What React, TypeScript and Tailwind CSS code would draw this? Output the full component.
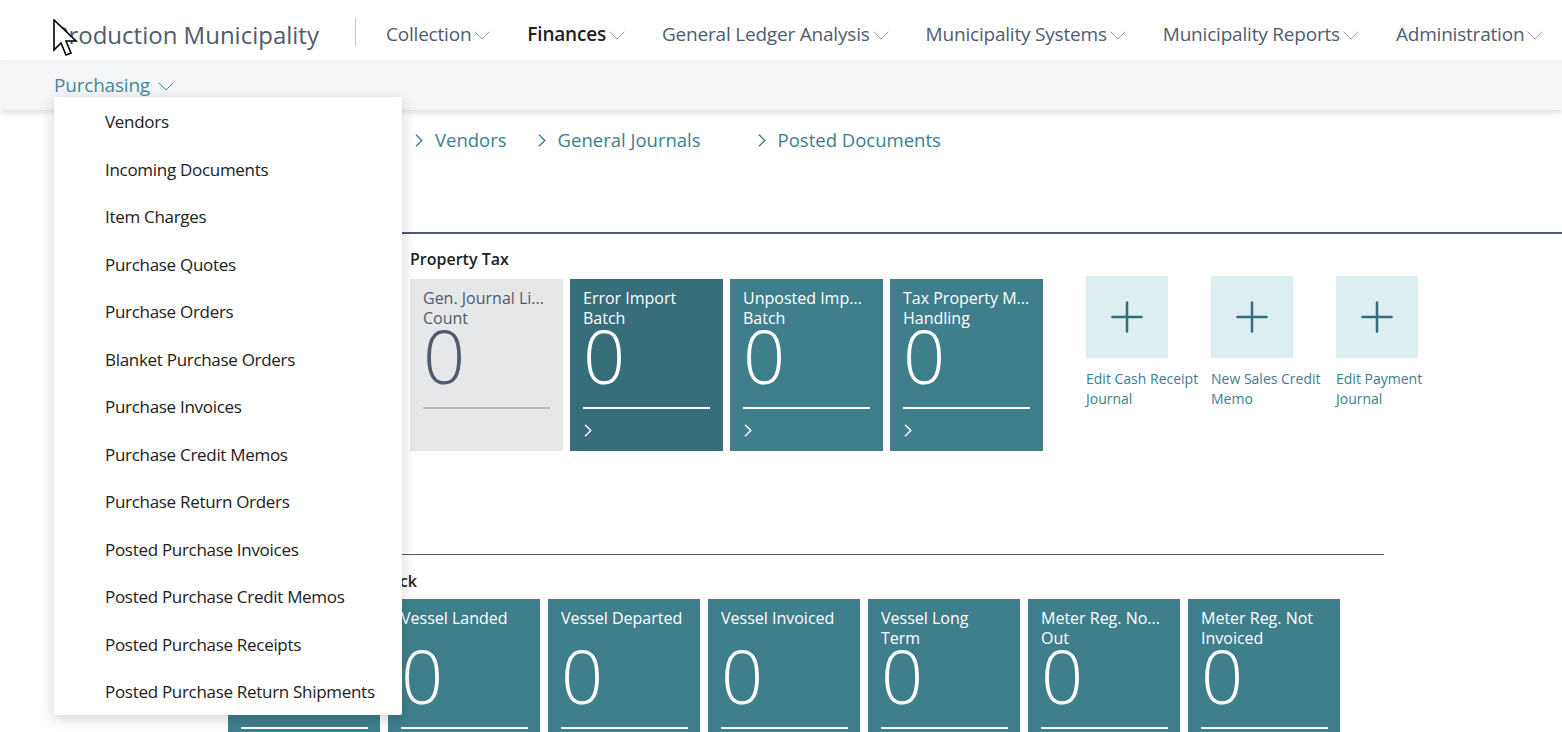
import { Plus } from 'lucide-react'

const NAV = ['Collection', 'Finances', 'General Ledger Analysis', 'Municipality Systems', 'Municipality Reports', 'Administration']

const MENU = [
  'Vendors',
  'Incoming Documents',
  'Item Charges',
  'Purchase Quotes',
  'Purchase Orders',
  'Blanket Purchase Orders',
  'Purchase Invoices',
  'Purchase Credit Memos',
  'Purchase Return Orders',
  'Posted Purchase Invoices',
  'Posted Purchase Credit Memos',
  'Posted Purchase Receipts',
  'Posted Purchase Return Shipments',
]

const TAX_TILES = [
  { title: ['Gen. Journal Li...', 'Count'], kind: 'gray' },
  { title: ['Error Import', 'Batch'], kind: 'dark' },
  { title: ['Unposted Imp...', 'Batch'], kind: 'teal' },
  { title: ['Tax Property M...', 'Handling'], kind: 'teal' },
]

const VESSEL_TILES = [
  ['Vessel Arrived'],
  ['Vessel Landed'],
  ['Vessel Departed'],
  ['Vessel Invoiced'],
  ['Vessel Long', 'Term'],
  ['Meter Reg. No...', 'Out'],
  ['Meter Reg. Not', 'Invoiced'],
]

const ACTIONS = [
  ['Edit Cash Receipt', 'Journal'],
  ['New Sales Credit', 'Memo'],
  ['Edit Payment', 'Journal'],
]

// thin chevrons like the Fluent ones
function Down({ className = '' }: { className?: string }) {
  return (
    <svg className={className} width="16" height="9" viewBox="0 0 16 9" fill="none">
      <polyline points="0.7,0.7 8,8 15.3,0.7" stroke="currentColor" strokeWidth="1" />
    </svg>
  )
}

function Right({ className = '' }: { className?: string }) {
  return (
    <svg className={className} width="8" height="13" viewBox="0 0 8 13" fill="none">
      <polyline points="1,0.8 6.8,6.5 1,12.2" stroke="currentColor" strokeWidth="1.4" />
    </svg>
  )
}

function Tile({ title, kind, w }: { title: string[]; kind: string; w: string }) {
  const bg = kind === 'gray' ? 'bg-[#e6e7e9] text-[#505c6d]' : kind === 'dark' ? 'bg-[#366e79] text-white' : 'bg-[#3f7f8c] text-white'
  const line = kind === 'gray' ? 'bg-[#b9bec4]' : 'bg-white'
  return (
    <div className={`${w} h-[172px] shrink-0 ${bg} flex flex-col px-[13px] pt-[9px]`}>
      <div className="h-[40px] text-[16px] leading-[20px] whitespace-nowrap">
        {title.map((t) => (
          <div key={t}>{t}</div>
        ))}
      </div>
      <div className="h-[79px] text-[74px] leading-[56px] font-light">0</div>
      <div className={`h-[2px] w-[127px] ${line}`} />
      {kind !== 'gray' && <Right className="mt-[15px] ml-[1px]" />}
    </div>
  )
}

export default function App() {
  return (
    <div className="relative w-[1562px] h-[732px] overflow-hidden bg-white font-['Segoe_UI','Open_Sans',sans-serif]">
      {/* top bar */}
      <div className="h-[60px] flex items-center pl-[54px] pt-[9px]">
        <span className="text-[24px] text-[#505c6d]">Production Municipality</span>
        <div className="ml-[36px] w-px h-[28px] bg-[#c6c8cc] -mt-[6px]" />
        <div className="ml-[30px] flex items-center gap-[37px]">
          {NAV.map((n) => (
            <div key={n} className={`flex items-center text-[19px] tracking-[-0.2px] ${n === 'Finances' ? 'font-semibold text-[#212121]' : 'text-[#505c6d]'}`}>
              {n}
              <Down className="ml-[3px] mt-[2px] text-[#9aa0a6]" />
            </div>
          ))}
        </div>
      </div>

      {/* sub bar */}
      <div className="h-[50px] bg-[#f4f5f6] shadow-[0_3px_5px_rgba(0,0,0,0.12)] flex items-center pl-[54px] relative z-10">
        <span className="text-[19px] text-[#3f8a99] tracking-[-0.2px]">Purchasing</span>
        <Down className="ml-[8px] mt-[2px] text-[#3f8a99]" />
      </div>

      {/* content */}
      <div className="pl-[228px]">
        <div className="h-[60px] flex items-center pl-[187px] text-[18.5px] text-[#3a7f8f]">
          <div className="flex items-center gap-[12px]">
            <Right />
            Vendors
          </div>
          <div className="flex items-center gap-[12px] ml-[31px]">
            <Right />
            General Journals
          </div>
          <div className="flex items-center gap-[12px] ml-[57px]">
            <Right />
            Posted Documents
          </div>
        </div>

        <div className="mt-[62px] h-[2px] bg-[#505c6d]" />

        <div className="flex pl-[182px]">
          <div>
            <div className="pt-[13px] h-[45px] text-[16px] font-semibold text-[#212121]">Property Tax</div>
            <div className="flex gap-[7px]">
              {TAX_TILES.map((t) => (
                <Tile key={t.title[0]} title={t.title} kind={t.kind} w="w-[153px]" />
              ))}
            </div>
          </div>
          <div className="ml-[43px] mt-[42px] flex gap-[43px]">
            {ACTIONS.map((a) => (
              <div key={a[0]} className="w-[82px]">
                <div className="w-[82px] h-[82px] bg-[#ddeef1] flex items-center justify-center">
                  <Plus className="w-[50px] h-[50px] text-[#366e79]" strokeWidth={1.2} />
                </div>
                <div className="mt-[11px] text-[14px] leading-[20px] text-[#3a7f8f] whitespace-nowrap">
                  {a.map((l) => (
                    <div key={l}>{l}</div>
                  ))}
                </div>
              </div>
            ))}
          </div>
        </div>

        <div className="mt-[103px] w-[1156px] h-px bg-[#505c6d]" />
        <div className="pt-[14px] h-[44px] text-[16px] font-semibold text-[#212121] pl-[1px]">Harbour &amp; Vessels Track</div>
        <div className="flex gap-[8px]">
          {VESSEL_TILES.map((t) => (
            <Tile key={t[0]} title={t} kind="teal" w="w-[152px]" />
          ))}
        </div>
      </div>

      {/* dropdown menu */}
      <div className="absolute left-[54px] top-[97px] w-[348px] h-[618px] bg-white rounded-[2px] shadow-[0_4px_14px_rgba(0,0,0,0.18)] z-20 pt-[1px]">
        {MENU.map((m) => (
          <div key={m} className="h-[47.5px] flex items-center pl-[51px] text-[17px] text-[#212121] tracking-[-0.3px]">
            {m}
          </div>
        ))}
      </div>

      {/* mouse cursor */}
      <svg className="absolute left-[53px] top-[19px] z-30" width="26" height="40" viewBox="0 0 13 20">
        <path d="M0.5 0.5 L0.5 15.5 L4 12 L6.5 18 L9 17 L6.5 11 L11.5 11 Z" fill="white" stroke="black" strokeWidth="0.8" strokeLinejoin="miter" />
      </svg>
    </div>
  )
}
